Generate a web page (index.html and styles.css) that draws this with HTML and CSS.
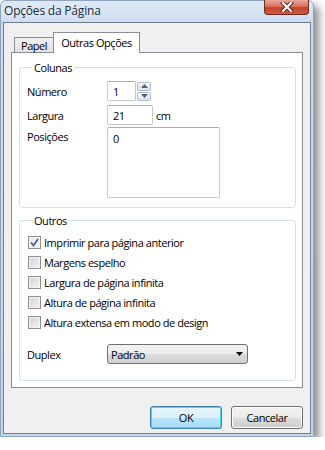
FILE: index.html
```html
<!DOCTYPE html>
<html lang="pt">
<head>
    <meta charset="UTF-8">
    <title>Opções da Página</title>
    <link rel="stylesheet" href="styles.css">
</head>
<body>

<div class="window">
    <div class="titlebar">
        <span class="title">Opções da Página</span>
        <span class="close-btn">
            <svg width="14" height="10" viewBox="0 0 14 10">
                <path d="M3 1 L11 9 M11 1 L3 9" stroke="#5a1c16" stroke-width="4" stroke-linecap="square"/>
                <path d="M3 1 L11 9 M11 1 L3 9" stroke="#ffffff" stroke-width="2.2" stroke-linecap="square"/>
            </svg>
        </span>
    </div>

    <div class="client">
        <div class="tabs">
            <div class="tab">Papel</div>
            <div class="tab active">Outras Opções</div>
        </div>

        <div class="panel">
            <fieldset class="group">
                <legend>Colunas</legend>
                <div class="form-row">
                    <span class="label">Número</span>
                    <div class="spin">
                        <div class="textbox small">1</div>
                        <div class="spin-buttons">
                            <span class="spin-btn"><svg width="7" height="4" viewBox="0 0 7 4"><path d="M0 4 L3.5 0 L7 4 Z" fill="#4d6185"/></svg></span>
                            <span class="spin-btn"><svg width="7" height="4" viewBox="0 0 7 4"><path d="M0 0 L3.5 4 L7 0 Z" fill="#4d6185"/></svg></span>
                        </div>
                    </div>
                </div>
                <div class="form-row">
                    <span class="label">Largura</span>
                    <div class="textbox medium">21</div>
                    <span class="unit">cm</span>
                </div>
                <div class="form-row top">
                    <span class="label">Posições</span>
                    <div class="textbox area">0</div>
                </div>
            </fieldset>

            <fieldset class="group">
                <legend>Outros</legend>
                <div class="check-row">
                    <span class="checkbox checked">
                        <svg width="9" height="9" viewBox="0 0 9 9"><path d="M1 4.5 L3.5 7.5 L8 1" fill="none" stroke="#4a5f97" stroke-width="1.8"/></svg>
                    </span>
                    Imprimir para página anterior
                </div>
                <div class="check-row"><span class="checkbox"></span>Margens espelho</div>
                <div class="check-row"><span class="checkbox"></span>Largura de página infinita</div>
                <div class="check-row"><span class="checkbox"></span>Altura de página infinita</div>
                <div class="check-row"><span class="checkbox"></span>Altura extensa em modo de design</div>
                <div class="form-row duplex">
                    <span class="label">Duplex</span>
                    <div class="combo">
                        <span>Padrão</span>
                        <svg width="7" height="4" viewBox="0 0 7 4"><path d="M0 0 L7 0 L3.5 4 Z" fill="#000"/></svg>
                    </div>
                </div>
            </fieldset>
        </div>

        <div class="buttons">
            <button class="btn default">OK</button>
            <button class="btn">Cancelar</button>
        </div>
    </div>
</div>

</body>
</html>
```

FILE: styles.css
```css
body {
    margin: 0;
    padding: 0;
    background-color: #ffffff;
    font-family: "Open Sans", "Noto Sans", sans-serif;
    font-size: 11px;
    letter-spacing: -0.45px;
    color: #000000;
}
.window {
    width: 314px;
    height: 437px;
    box-sizing: border-box;
    background: linear-gradient(to bottom, #dfe9f5 0px, #cddcef 22px, #c4d6ec 100%);
    border: 1px solid #8ea4c1;
    border-radius: 6px 6px 0 0;
    box-shadow: 5px 5px 8px rgba(0, 0, 0, 0.45);
    display: flex;
    flex-direction: column;
}
.titlebar {
    height: 21px;
    display: flex;
    justify-content: space-between;
    align-items: flex-start;
    padding-left: 3px;
}
.title {
    font-size: 12px;
    letter-spacing: -0.2px;
    color: #1b2a3d;
    line-height: 17px;
    padding-top: 1px;
    text-shadow: 0 0 6px #ffffff;
}
.close-btn {
    width: 45px;
    height: 15px;
    margin-right: 4px;
    margin-top: -1px;
    box-sizing: border-box;
    border: 1px solid #6e2a22;
    border-top: none;
    border-radius: 0 0 4px 4px;
    background: linear-gradient(to bottom, #e9a99b 0%, #d7735f 45%, #c24430 55%, #d25b3e 100%);
    display: flex;
    justify-content: center;
    align-items: center;
}
.client {
    flex: 1;
    margin: 0 2px 2px 2px;
    background-color: #f0f0f0;
    border: 1px solid #6d7d93;
    padding: 9px 7px 0 7px;
}
.tabs {
    display: flex;
    align-items: flex-end;
    height: 20px;
    padding-left: 3px;
}
.tab {
    height: 14px;
    padding: 0 6px;
    border: 1px solid #898c95;
    border-bottom: none;
    border-right: none;
    background: linear-gradient(to bottom, #f2f2f2, #e1e1e1);
    line-height: 16px;
    color: #000;
}
.tab.active {
    height: 20px;
    padding: 0 7px;
    border-right: 1px solid #898c95;
    background: #ffffff;
    position: relative;
    z-index: 1;
    margin-bottom: -1px;
    line-height: 19px;
}
.panel {
    height: 336px;
    box-sizing: border-box;
    background-color: #ffffff;
    border: 1px solid #898c95;
    padding: 7px 6px 0 7px;
}
.group {
    margin: 0 0 5px 0;
    padding: 4px 0 0 7px;
    border: 1px solid #d5dfe5;
    border-radius: 3px;
}
.group legend {
    padding: 0 2px;
    margin-left: 5px;
    line-height: 15px;
}
.form-row {
    display: flex;
    align-items: center;
    height: 24px;
}
.form-row.top {
    align-items: flex-start;
    height: 80px;
}
.form-row.top .label {
    padding-top: 2px;
}
.label {
    width: 80px;
    flex-shrink: 0;
}
.textbox {
    height: 20px;
    box-sizing: border-box;
    border: 1px solid #c5c8cf;
    border-top-color: #abadb3;
    border-radius: 2px;
    background: #ffffff;
    padding: 2px 0 0 5px;
    line-height: 15px;
}
.textbox.small {
    width: 29px;
}
.textbox.medium {
    width: 46px;
}
.textbox.area {
    width: 113px;
    height: 71px;
    padding-top: 3px;
}
.unit {
    margin-left: 3px;
}
.spin {
    display: flex;
    align-items: center;
}
.spin-buttons {
    display: flex;
    flex-direction: column;
    gap: 1px;
    margin-left: 1px;
}
.spin-btn {
    width: 14px;
    height: 9px;
    box-sizing: border-box;
    border: 1px solid #b3bcc9;
    border-radius: 2px;
    background: linear-gradient(to bottom, #f5f6f8, #dde2ea);
    display: flex;
    justify-content: center;
    align-items: center;
}
.check-row {
    display: flex;
    align-items: center;
    height: 20px;
    padding-left: 1px;
}
.checkbox {
    width: 13px;
    height: 13px;
    box-sizing: border-box;
    border: 1px solid #8f8f8f;
    background: linear-gradient(135deg, #d3d3d3, #f4f4f4);
    box-shadow: inset 0 0 0 1px #f4f4f4;
    margin-right: 3px;
    display: flex;
    justify-content: center;
    align-items: center;
}
.checkbox.checked {
    background: linear-gradient(135deg, #e3e6ea, #fbfbfb);
}
.duplex {
    margin-top: 12px;
    margin-bottom: 16px;
    height: 20px;
}
.combo {
    width: 141px;
    height: 20px;
    box-sizing: border-box;
    border: 1px solid #707070;
    border-radius: 3px;
    background: linear-gradient(to bottom, #f2f2f2 0%, #ebebeb 50%, #dddddd 51%, #cfcfcf 100%);
    display: flex;
    justify-content: space-between;
    align-items: center;
    padding: 0 4px 0 3px;
}
.buttons {
    display: flex;
    justify-content: flex-end;
    gap: 9px;
    margin-top: 18px;
}
.btn {
    width: 72px;
    height: 23px;
    font-family: "Open Sans", "Noto Sans", sans-serif;
    font-size: 11px;
    letter-spacing: -0.45px;
    color: #000;
    border: 1px solid #707070;
    border-radius: 3px;
    background: linear-gradient(to bottom, #f2f2f2 0%, #ebebeb 50%, #dddddd 51%, #cfcfcf 100%);
    box-shadow: inset 0 0 0 1px #fcfcfc;
    padding: 0;
}
.btn.default {
    border-color: #3c7fb1;
    background: linear-gradient(to bottom, #eaf6fd 0%, #d9f0fc 50%, #bee6fd 51%, #a7d9f5 100%);
    box-shadow: inset 0 0 0 1px #48d7f9;
}
```
